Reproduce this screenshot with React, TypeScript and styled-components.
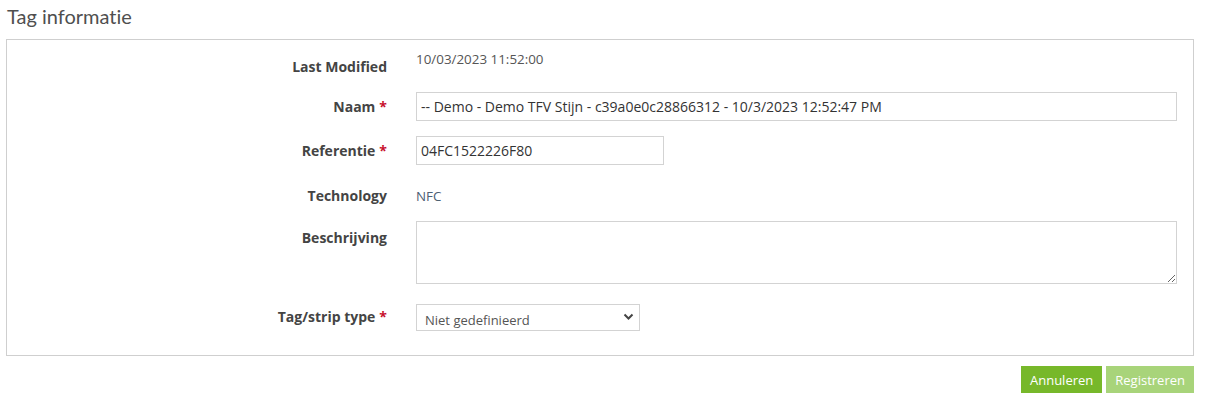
import React from 'react';
import styled, { createGlobalStyle } from 'styled-components';

const GlobalStyle = createGlobalStyle`
  html, body {
    margin: 0;
    padding: 0;
    background: #fff;
    font-family: 'Open Sans', 'Liberation Sans', sans-serif;
  }
`;

const Page = styled.div`
  padding: 4px 15px 0 6px;
`;

const Title = styled.h2`
  margin: 0 0 11px 1px;
  font-family: Lato, 'Open Sans', sans-serif;
  font-weight: 400;
  font-size: 20px;
  line-height: 24px;
  color: #4f4f4f;
  font-variant-ligatures: none;
`;

const Panel = styled.div`
  border: 1px solid #cfcfcf;
  padding: 9px 16px 24px 0;
`;

const Row = styled.div<{ $gap?: number; $align?: string }>`
  display: grid;
  grid-template-columns: 380px 1fr;
  column-gap: 29px;
  align-items: ${(p) => p.$align || 'center'};
  min-height: 28px;
  margin-bottom: ${(p) => (p.$gap === undefined ? 15 : p.$gap)}px;
  &:last-child {
    margin-bottom: 0;
  }
`;

const Label = styled.label<{ $top?: number }>`
  text-align: right;
  font-weight: 700;
  font-size: 14px;
  line-height: 20px;
  color: #444;
  padding-top: ${(p) => p.$top || 0}px;
`;

const Req = styled.span`
  color: #c8102e;
  margin-left: 4px;
`;

const Value = styled.div<{ $blue?: boolean; $top?: number }>`
  font-size: 13.4px;
  line-height: 20px;
  color: ${(p) => (p.$blue ? '#4d6073' : '#555')};
  align-self: ${(p) => (p.$top !== undefined ? 'start' : 'center')};
  margin-top: ${(p) => p.$top || 0}px;
`;

const TextInput = styled.input<{ $width?: number }>`
  box-sizing: border-box;
  height: 29px;
  width: ${(p) => (p.$width ? `${p.$width}px` : '100%')};
  border: 1px solid #d3d3d3;
  padding: 0 4px;
  font-family: 'Open Sans', 'Liberation Sans', sans-serif;
  font-size: 14px;
  color: #333;
  outline: none;
`;

const TextArea = styled.textarea`
  box-sizing: border-box;
  display: block;
  width: 100%;
  height: 63px;
  border: 1px solid #d3d3d3;
  font-family: 'Open Sans', 'Liberation Sans', sans-serif;
  font-size: 14px;
  resize: both;
  outline: none;
`;

const SelectWrap = styled.div`
  position: relative;
  width: 224px;
  height: 27px;
`;

const Select = styled.select`
  box-sizing: border-box;
  width: 100%;
  height: 27px;
  border: 1px solid #d3d3d3;
  background: #fff;
  padding: 6px 24px 0 8px;
  font-family: 'Open Sans', 'Liberation Sans', sans-serif;
  font-size: 13px;
  color: #555;
  appearance: none;
  outline: none;
`;

const Chevron = styled.svg`
  position: absolute;
  right: 6px;
  top: 9px;
  pointer-events: none;
`;

const Actions = styled.div`
  display: flex;
  justify-content: flex-end;
  gap: 4px;
  margin-top: 10px;
`;

const Button = styled.button<{ $disabled?: boolean }>`
  height: 27px;
  padding: 0 9px;
  border: none;
  background: ${(p) => (p.$disabled ? '#a8d47a' : '#77b82a')};
  color: #fff;
  font-family: 'Open Sans', 'Liberation Sans', sans-serif;
  font-size: 13px;
  cursor: ${(p) => (p.$disabled ? 'default' : 'pointer')};
`;

export default function App() {
  return (
    <Page>
      <GlobalStyle />
      <Title>Tag informatie</Title>
      <Panel>
        <Row $align="start">
          <Label $top={8}>Last Modified</Label>
          <Value $top={0}>10/03/2023 11:52:00</Value>
        </Row>
        <Row>
          <Label>
            Naam<Req>*</Req>
          </Label>
          <TextInput defaultValue="-- Demo - Demo TFV Stijn - c39a0e0c28866312 - 10/3/2023 12:52:47 PM" />
        </Row>
        <Row $gap={17}>
          <Label>
            Referentie<Req>*</Req>
          </Label>
          <TextInput $width={248} defaultValue="04FC1522226F80" />
        </Row>
        <Row $gap={11}>
          <Label>Technology</Label>
          <Value $blue>NFC</Value>
        </Row>
        <Row $align="start" $gap={19}>
          <Label $top={7}>Beschrijving</Label>
          <TextArea />
        </Row>
        <Row>
          <Label>
            Tag/strip type<Req>*</Req>
          </Label>
          <SelectWrap>
            <Select defaultValue="none">
              <option value="none">Niet gedefinieerd</option>
            </Select>
            <Chevron width="11" height="8" viewBox="0 0 11 8">
              <path d="M1.5 1.5 L5.5 5.5 L9.5 1.5" fill="none" stroke="#444" strokeWidth="2" />
            </Chevron>
          </SelectWrap>
        </Row>
      </Panel>
      <Actions>
        <Button>Annuleren</Button>
        <Button $disabled>Registreren</Button>
      </Actions>
    </Page>
  );
}
